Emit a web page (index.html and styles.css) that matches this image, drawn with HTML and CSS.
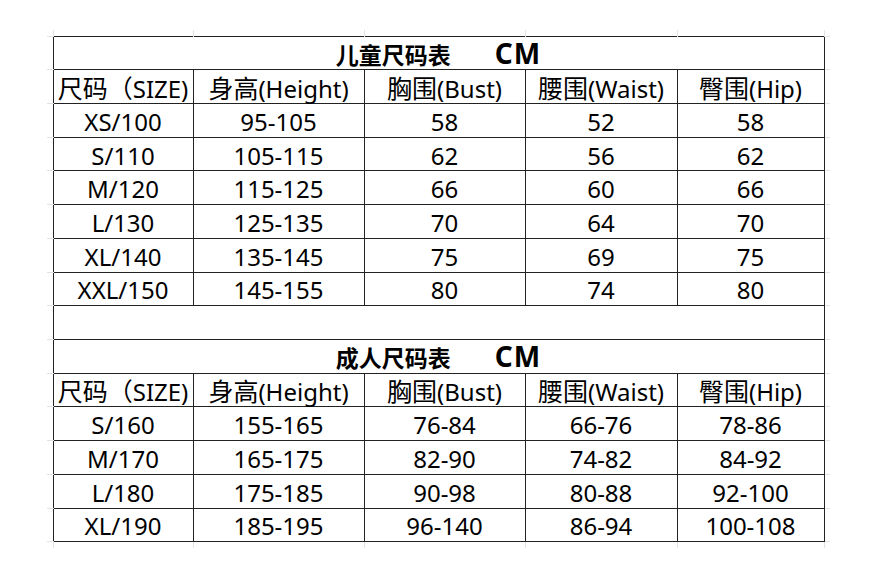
FILE: index.html
```html
<!DOCTYPE html>
<html lang="zh">
<head>
<meta charset="utf-8">
<title>尺码表</title>
<link rel="stylesheet" href="styles.css">
</head>
<body>
<table class="sheet">
  <colgroup>
    <col class="c-edge">
    <col class="c1"><col class="c2"><col class="c3"><col class="c4"><col class="c5">
    <col class="c-edge">
  </colgroup>
  <tr class="edge-row top">
    <td class="corner"></td><td></td><td></td><td></td><td></td><td></td><td class="corner"></td>
  </tr>
  <tr class="title">
    <td class="edge"></td>
    <td colspan="5"><span class="zh">儿童尺码表</span><span class="unit">CM</span></td>
    <td class="edge"></td>
  </tr>
  <tr class="head">
    <td class="edge"></td>
    <td><span class="zh">尺码（</span>SIZE)</td>
    <td><span class="zh">身高</span>(Height)</td>
    <td><span class="zh">胸围</span>(Bust)</td>
    <td><span class="zh">腰围</span>(Waist)</td>
    <td><span class="zh">臀围</span>(Hip)</td>
    <td class="edge"></td>
  </tr>
  <tr><td class="edge"></td><td>XS/100</td><td>95-105</td><td>58</td><td>52</td><td>58</td><td class="edge"></td></tr>
  <tr><td class="edge"></td><td>S/110</td><td>105-115</td><td>62</td><td>56</td><td>62</td><td class="edge"></td></tr>
  <tr><td class="edge"></td><td>M/120</td><td>115-125</td><td>66</td><td>60</td><td>66</td><td class="edge"></td></tr>
  <tr><td class="edge"></td><td>L/130</td><td>125-135</td><td>70</td><td>64</td><td>70</td><td class="edge"></td></tr>
  <tr><td class="edge"></td><td>XL/140</td><td>135-145</td><td>75</td><td>69</td><td>75</td><td class="edge"></td></tr>
  <tr><td class="edge"></td><td>XXL/150</td><td>145-155</td><td>80</td><td>74</td><td>80</td><td class="edge"></td></tr>
  <tr class="blank"><td class="edge"></td><td colspan="5"></td><td class="edge"></td></tr>
  <tr class="title">
    <td class="edge"></td>
    <td colspan="5"><span class="zh">成人尺码表</span><span class="unit">CM</span></td>
    <td class="edge"></td>
  </tr>
  <tr class="head">
    <td class="edge"></td>
    <td><span class="zh">尺码（</span>SIZE)</td>
    <td><span class="zh">身高</span>(Height)</td>
    <td><span class="zh">胸围</span>(Bust)</td>
    <td><span class="zh">腰围</span>(Waist)</td>
    <td><span class="zh">臀围</span>(Hip)</td>
    <td class="edge"></td>
  </tr>
  <tr><td class="edge"></td><td>S/160</td><td>155-165</td><td>76-84</td><td>66-76</td><td>78-86</td><td class="edge"></td></tr>
  <tr><td class="edge"></td><td>M/170</td><td>165-175</td><td>82-90</td><td>74-82</td><td>84-92</td><td class="edge"></td></tr>
  <tr><td class="edge"></td><td>L/180</td><td>175-185</td><td>90-98</td><td>80-88</td><td>92-100</td><td class="edge"></td></tr>
  <tr><td class="edge"></td><td>XL/190</td><td>185-195</td><td>96-140</td><td>86-94</td><td>100-108</td><td class="edge"></td></tr>
  <tr class="edge-row bottom">
    <td class="corner"></td><td></td><td></td><td></td><td></td><td></td><td class="corner"></td>
  </tr>
</table>
</body>
</html>
```
FILE: styles.css
```css
html, body {
  margin: 0;
  padding: 0;
  background: #fff;
}

body {
  font-family: "Noto Sans", "Noto Sans CJK SC", sans-serif;
  color: #000;
}

.sheet {
  border-collapse: collapse;
  table-layout: fixed;
  margin: 30px 0 0 47px;
  font-size: 24px;
}

.c-edge { width: 6px; }
.c1 { width: 140px; }
.c2 { width: 171px; }
.c3 { width: 161px; }
.c4 { width: 152px; }
.c5 { width: 147px; }

.sheet td {
  border: 1px solid #222;
  padding: 0;
  height: 33.73px;
  text-align: center;
  vertical-align: middle;
  white-space: nowrap;
  line-height: 1;
  padding-top: 3px;
  box-sizing: border-box;
}

.sheet .edge-row td {
  height: 6px;
  padding: 0;
  border-top: none;
  border-bottom: none;
  border-left: 1px solid #e3e3e3;
  border-right: 1px solid #e3e3e3;
}

.sheet .edge-row td.corner {
  border: none;
}

.sheet td.edge {
  border-left: none;
  border-right: none;
  border-top: 1px solid #e3e3e3;
  border-bottom: 1px solid #e3e3e3;
}

.zh {
  font-family: "Noto Sans CJK SC", sans-serif;
  font-size: 25px;
}

.title td {
  font-weight: 700;
  padding-top: 0;
}

.title .zh {
  font-size: 23px;
}

.title .unit {
  font-family: "Noto Sans", sans-serif;
  font-size: 28px;
  letter-spacing: 1px;
  margin-left: 44px;
}

.head td {
  padding-top: 2px;
}
```
